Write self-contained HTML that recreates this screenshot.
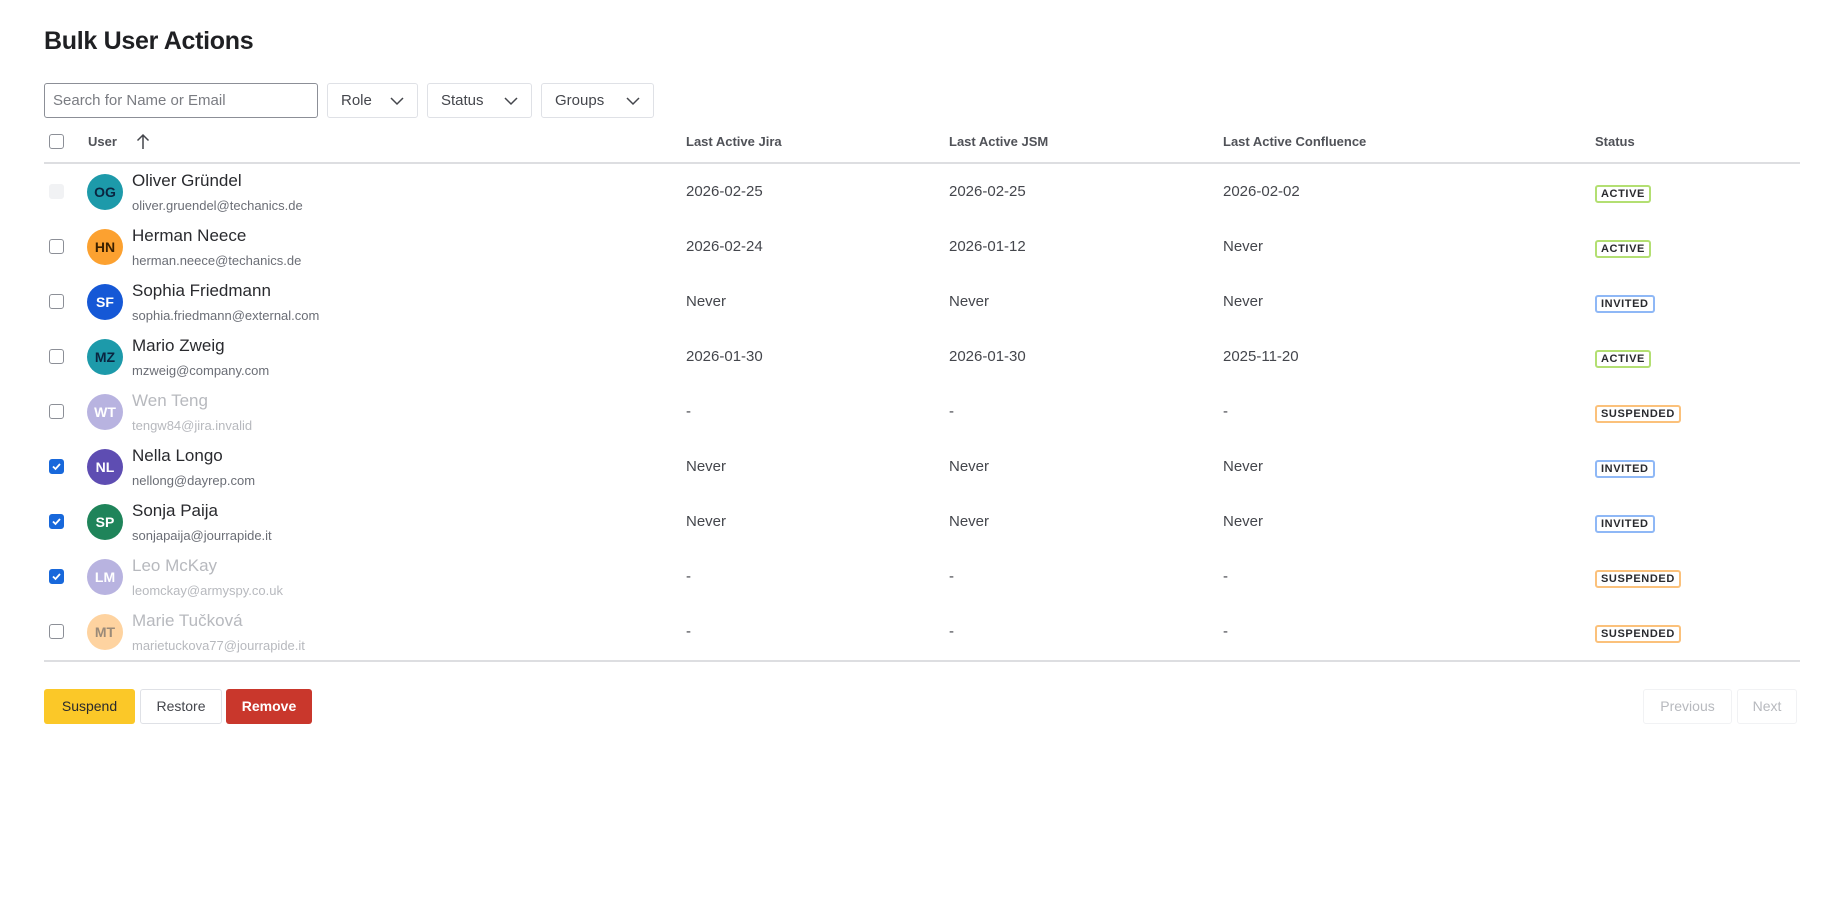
<!DOCTYPE html>
<html><head><meta charset="utf-8"><style>
*{box-sizing:border-box;margin:0;padding:0}
body{width:1840px;height:900px;background:#fff;font-family:"Liberation Sans",sans-serif;color:#292a2e;position:relative;overflow:hidden}
.a{position:absolute}
h1{position:absolute;left:44px;top:27px;font-size:25px;font-weight:bold;color:#1f2023;letter-spacing:-0.3px}
.inp{position:absolute;top:83px;height:35px;border:1px solid #8c8f97;border-radius:3px;font-size:15px;color:#7a7c82;padding:8px 8px;left:44px;width:274px}
.dd{position:absolute;top:83px;height:35px;border:1px solid #dfe1e6;border-radius:3px;font-size:15px;color:#44464c;padding:8px 13px;white-space:nowrap}
.dd svg{position:absolute;right:13px;top:12px}
.cb{position:absolute;left:49px;width:15px;height:15px;border:1.5px solid #8c8f97;border-radius:3px;background:#fff}
.cb.dis{border-color:#f1f2f4;background:#f1f2f4}
.cb.on{background:#1868db;border-color:#1868db}
.cb.on svg{position:absolute;left:1px;top:1px}
.th{position:absolute;top:134px;font-size:13px;font-weight:bold;color:#505258;white-space:nowrap}
.line{position:absolute;left:44px;width:1756px;height:2px;background:#dddee1}
.av{position:absolute;left:87px;width:36px;height:36px;border-radius:50%;color:#fff;font-size:14px;font-weight:bold;text-align:center;line-height:36px}
.nm{position:absolute;left:132px;font-size:17px;color:#292a2e;white-space:nowrap}
.em{position:absolute;left:132px;font-size:13px;color:#6b6e76;white-space:nowrap}
.fd .nm,.fd .em{color:#b7b9be}
.c{position:absolute;font-size:15px;color:#44464c;white-space:nowrap}
.b{position:absolute;left:1595px;height:18px;border:2px solid;border-radius:3px;font-size:11px;font-weight:bold;letter-spacing:0.6px;padding:0 4px;line-height:14px;color:#292a2e;white-space:nowrap}
.ac{border-color:#b3df72}.iv{border-color:#8fb8f6}.sp{border-color:#fbc17b}
.btn{position:absolute;top:689px;height:35px;border-radius:3px;font-size:14px;text-align:center;line-height:33px;border:1px solid transparent;white-space:nowrap}
</style></head><body>
<h1>Bulk User Actions</h1>
<div class="inp">Search for Name or Email</div>
<div class="dd" style="left:327px;width:91px">Role<svg width="14" height="10" viewBox="0 0 14 10"><path d="M1 2l6 6 6-6" fill="none" stroke="#44464c" stroke-width="1.5"/></svg></div>
<div class="dd" style="left:427px;width:105px">Status<svg width="14" height="10" viewBox="0 0 14 10"><path d="M1 2l6 6 6-6" fill="none" stroke="#44464c" stroke-width="1.5"/></svg></div>
<div class="dd" style="left:541px;width:113px">Groups<svg width="14" height="10" viewBox="0 0 14 10"><path d="M1 2l6 6 6-6" fill="none" stroke="#44464c" stroke-width="1.5"/></svg></div>

<div class="cb" style="top:134px"></div>
<div class="th" style="left:88px">User</div>
<svg class="a" style="left:136px;top:133px" width="14" height="17" viewBox="0 0 14 17"><path d="M7 16V2M1.5 7.5L7 2l5.5 5.5" fill="none" stroke="#44464c" stroke-width="1.5"/></svg>
<div class="th" style="left:686px">Last Active Jira</div>
<div class="th" style="left:949px">Last Active JSM</div>
<div class="th" style="left:1223px">Last Active Confluence</div>
<div class="th" style="left:1595px">Status</div>
<div class="line" style="top:162px"></div>

<div class="a" style="top:192px"><div class="cb dis" style="top:-8px"></div><div class="av" style="top:-18px;background:#1d9aaa;color:#0a2540">OG</div><div class="nm" style="top:-21px">Oliver Gründel</div><div class="em" style="top:6px">oliver.gruendel@techanics.de</div><div class="c" style="left:686px;top:-9px">2026-02-25</div><div class="c" style="left:949px;top:-9px">2026-02-25</div><div class="c" style="left:1223px;top:-9px">2026-02-02</div><div class="b ac" style="top:-7px">ACTIVE</div></div>
<div class="a" style="top:247px"><div class="cb" style="top:-8px"></div><div class="av" style="top:-18px;background:#fca130;color:#3a2000">HN</div><div class="nm" style="top:-21px">Herman Neece</div><div class="em" style="top:6px">herman.neece@techanics.de</div><div class="c" style="left:686px;top:-9px">2026-02-24</div><div class="c" style="left:949px;top:-9px">2026-01-12</div><div class="c" style="left:1223px;top:-9px">Never</div><div class="b ac" style="top:-7px">ACTIVE</div></div>
<div class="a" style="top:302px"><div class="cb" style="top:-8px"></div><div class="av" style="top:-18px;background:#1558d6">SF</div><div class="nm" style="top:-21px">Sophia Friedmann</div><div class="em" style="top:6px">sophia.friedmann@external.com</div><div class="c" style="left:686px;top:-9px">Never</div><div class="c" style="left:949px;top:-9px">Never</div><div class="c" style="left:1223px;top:-9px">Never</div><div class="b iv" style="top:-7px">INVITED</div></div>
<div class="a" style="top:357px"><div class="cb" style="top:-8px"></div><div class="av" style="top:-18px;background:#1d9aaa;color:#0a2540">MZ</div><div class="nm" style="top:-21px">Mario Zweig</div><div class="em" style="top:6px">mzweig@company.com</div><div class="c" style="left:686px;top:-9px">2026-01-30</div><div class="c" style="left:949px;top:-9px">2026-01-30</div><div class="c" style="left:1223px;top:-9px">2025-11-20</div><div class="b ac" style="top:-7px">ACTIVE</div></div>
<div class="a fd" style="top:412px"><div class="cb" style="top:-8px"></div><div class="av" style="top:-18px;background:#b8b3e0">WT</div><div class="nm" style="top:-21px">Wen Teng</div><div class="em" style="top:6px">tengw84@jira.invalid</div><div class="c" style="left:686px;top:-9px">-</div><div class="c" style="left:949px;top:-9px">-</div><div class="c" style="left:1223px;top:-9px">-</div><div class="b sp" style="top:-7px">SUSPENDED</div></div>
<div class="a" style="top:467px"><div class="cb on" style="top:-8px"><svg width="11" height="11" viewBox="0 0 11 11"><path d="M2 5.5l2.5 2.5 4.5-5" fill="none" stroke="#fff" stroke-width="1.8"/></svg></div><div class="av" style="top:-18px;background:#5e4db2">NL</div><div class="nm" style="top:-21px">Nella Longo</div><div class="em" style="top:6px">nellong@dayrep.com</div><div class="c" style="left:686px;top:-9px">Never</div><div class="c" style="left:949px;top:-9px">Never</div><div class="c" style="left:1223px;top:-9px">Never</div><div class="b iv" style="top:-7px">INVITED</div></div>
<div class="a" style="top:522px"><div class="cb on" style="top:-8px"><svg width="11" height="11" viewBox="0 0 11 11"><path d="M2 5.5l2.5 2.5 4.5-5" fill="none" stroke="#fff" stroke-width="1.8"/></svg></div><div class="av" style="top:-18px;background:#1f845a">SP</div><div class="nm" style="top:-21px">Sonja Paija</div><div class="em" style="top:6px">sonjapaija@jourrapide.it</div><div class="c" style="left:686px;top:-9px">Never</div><div class="c" style="left:949px;top:-9px">Never</div><div class="c" style="left:1223px;top:-9px">Never</div><div class="b iv" style="top:-7px">INVITED</div></div>
<div class="a fd" style="top:577px"><div class="cb on" style="top:-8px"><svg width="11" height="11" viewBox="0 0 11 11"><path d="M2 5.5l2.5 2.5 4.5-5" fill="none" stroke="#fff" stroke-width="1.8"/></svg></div><div class="av" style="top:-18px;background:#b8b3e0">LM</div><div class="nm" style="top:-21px">Leo McKay</div><div class="em" style="top:6px">leomckay@armyspy.co.uk</div><div class="c" style="left:686px;top:-9px">-</div><div class="c" style="left:949px;top:-9px">-</div><div class="c" style="left:1223px;top:-9px">-</div><div class="b sp" style="top:-7px">SUSPENDED</div></div>
<div class="a fd" style="top:632px"><div class="cb" style="top:-8px"></div><div class="av" style="top:-18px;background:#fed3a0;color:#9a8a78">MT</div><div class="nm" style="top:-21px">Marie Tučková</div><div class="em" style="top:6px">marietuckova77@jourrapide.it</div><div class="c" style="left:686px;top:-9px">-</div><div class="c" style="left:949px;top:-9px">-</div><div class="c" style="left:1223px;top:-9px">-</div><div class="b sp" style="top:-7px">SUSPENDED</div></div>
<div class="line" style="top:660px"></div>

<div class="btn" style="left:44px;width:91px;background:#fbc828;color:#292a2e">Suspend</div>
<div class="btn" style="left:140px;width:82px;border-color:#dfe1e6;color:#44464c">Restore</div>
<div class="btn" style="left:226px;width:86px;background:#c9372c;color:#fff;font-weight:bold">Remove</div>
<div class="btn" style="left:1643px;width:89px;border-color:#f1f2f4;color:#b7b9be">Previous</div>
<div class="btn" style="left:1737px;width:60px;border-color:#f1f2f4;color:#b7b9be">Next</div>
</body></html>
